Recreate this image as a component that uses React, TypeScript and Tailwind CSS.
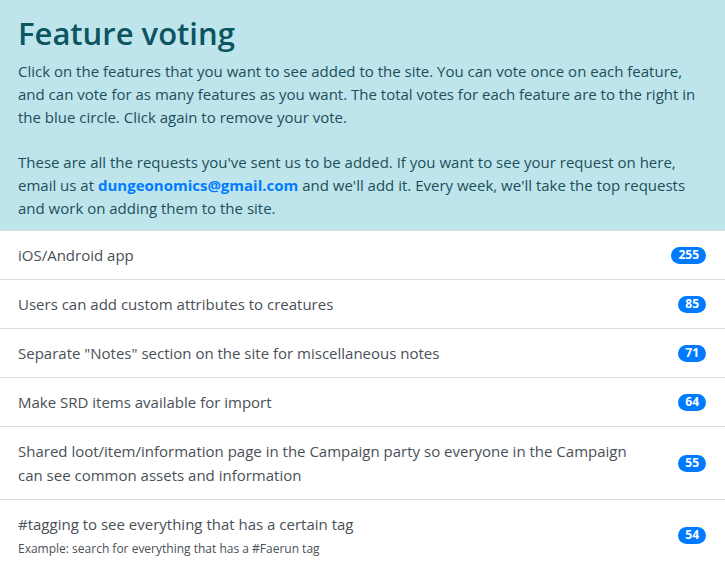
import React from "react";

const items: { title: string; sub?: string; votes: number }[] = [
  { title: "iOS/Android app", votes: 255 },
  { title: "Users can add custom attributes to creatures", votes: 85 },
  { title: 'Separate "Notes" section on the site for miscellaneous notes', votes: 71 },
  { title: "Make SRD items available for import", votes: 64 },
  {
    title:
      "Shared loot/item/information page in the Campaign party so everyone in the Campaign can see common assets and information",
    votes: 55,
  },
  {
    title: "#tagging to see everything that has a certain tag",
    sub: "Example: search for everything that has a #Faerun tag",
    votes: 54,
  },
];

export default function App() {
  return (
    <div className="w-[725px] h-[570px] overflow-hidden bg-white" style={{ fontFamily: '"Open Sans", "Noto Sans", sans-serif' }}>
      <div className="bg-[#bee5eb] px-[18px] pt-[14px] pb-[10px] border-b border-[#dcdcdc]">
        <h2 className="text-[31px] leading-[38px] font-semibold text-[#0c5460] mb-[8px]">Feature voting</h2>
        <p className="text-[15px] leading-[23px] text-[#1d4f5a] mb-[22px] pr-[8px]">
          Click on the features that you want to see added to the site. You can vote once on each feature, and can vote
          for as many features as you want. The total votes for each feature are to the right in the blue circle. Click
          again to remove your vote.
        </p>
        <p className="text-[15px] leading-[23px] text-[#1d4f5a] pr-[8px]">
          These are all the requests you've sent us to be added. If you want to see your request on here, email us at{" "}
          <a className="font-bold text-[#007bff]">dungeonomics@gmail.com</a> and we'll add it. Every week, we'll take the
          top requests and work on adding them to the site.
        </p>
      </div>
      <div>
        {items.map((it, i) => (
          <div
            key={i}
            className="flex items-center justify-between pl-[18px] pr-[19px] py-[12px] border-b border-[#dfdfdf]"
          >
            <div className="pr-[30px]">
              <div className="text-[15px] leading-[24px] text-[#495057]">{it.title}</div>
              {it.sub && <div className="text-[12px] leading-[18px] text-[#495057] mt-[4px]">{it.sub}</div>}
            </div>
            <span className="shrink-0 rounded-full bg-[#007bff] text-white text-[12px] font-bold leading-none px-[7px] py-[2.5px]">
              {it.votes}
            </span>
          </div>
        ))}
      </div>
    </div>
  );
}
